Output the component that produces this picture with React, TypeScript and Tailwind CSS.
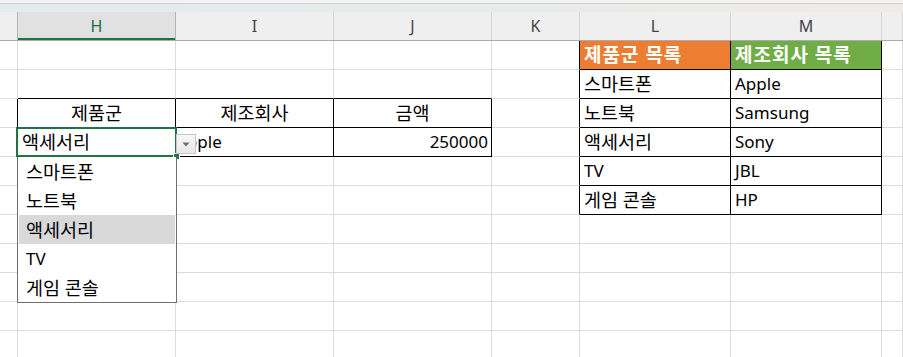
import React from "react";

type Cell = {
  text: string;
  align?: "left" | "center" | "right";
  kind?: "orange" | "green";
  pad?: "none";
};

const COLS = [18, 158, 158, 158, 88, 151, 151, 21];
const LETTERS = ["", "H", "I", "J", "K", "L", "M", ""];
const ROWS = 11;
const ROW_H = 29;

const cells: Record<string, Cell> = {
  "1,5": { text: "제품군 목록", kind: "orange" },
  "1,6": { text: "제조회사 목록", kind: "green" },
  "2,5": { text: "스마트폰" },
  "2,6": { text: "Apple" },
  "3,1": { text: "제품군", align: "center" },
  "3,2": { text: "제조회사", align: "center" },
  "3,3": { text: "금액", align: "center" },
  "3,5": { text: "노트북" },
  "3,6": { text: "Samsung" },
  "4,1": { text: "액세서리" },
  "4,2": { text: "Apple", pad: "none" },
  "4,3": { text: "250000", align: "right" },
  "4,5": { text: "액세서리" },
  "4,6": { text: "Sony" },
  "5,5": { text: "TV" },
  "5,6": { text: "JBL" },
  "6,5": { text: "게임 콘솔" },
  "6,6": { text: "HP" },
};

// bordered ranges: H3:J4 and L1:M6
function inTable(r: number, c: number) {
  if (r >= 3 && r <= 4 && c >= 1 && c <= 3) return true;
  if (r >= 1 && r <= 6 && c >= 5 && c <= 6) return true;
  return false;
}

const isHangul = (s: string) => /[가-힣]/.test(s);

const listItems = ["스마트폰", "노트북", "액세서리", "TV", "게임 콘솔"];

const FONT = {
  fontFamily: '"Noto Sans", "Noto Sans CJK KR", sans-serif',
};

function HeaderCell({ i }: { i: number }) {
  const selected = i === 1;
  const darkRight = i === 0 || i === 1;
  return (
    <div
      className={
        "flex items-center justify-center h-full border-r text-[16px] " +
        (darkRight ? "border-r-[#b4b4b4] " : "border-r-[#d6d6d6] ") +
        (selected
          ? "bg-[#e1e1e1] text-[#1d6b41] shadow-[inset_0_-2px_0_#217346]"
          : "bg-[#efefef] text-[#444444]")
      }
      style={{ width: COLS[i] }}
    >
      {LETTERS[i]}
    </div>
  );
}

function DataCell({ r, c }: { r: number; c: number }) {
  const cell = cells[`${r},${c}`];
  const blackRight = inTable(r, c) || inTable(r, c + 1);
  const blackBottom = inTable(r, c) || inTable(r + 1, c);
  const korean = cell ? isHangul(cell.text) : false;
  let bg = "bg-white text-black";
  let size = korean ? "text-[18.5px]" : "text-[17px]";
  if (cell?.kind === "orange") {
    bg = "bg-[#ed7d31] text-white font-bold";
    size = "text-[19px] tracking-[1px]";
  }
  if (cell?.kind === "green") {
    bg = "bg-[#70ad47] text-white font-bold";
    size = "text-[19px] tracking-[1px]";
  }
  const align =
    cell?.align === "center"
      ? "justify-center"
      : cell?.align === "right"
      ? "justify-end pr-[3px]"
      : cell?.pad === "none"
      ? "justify-start pl-0"
      : "justify-start pl-[4px]";
  return (
    <div
      className={
        "flex items-center h-full overflow-hidden whitespace-nowrap border-r border-b " +
        size +
        " " +
        (blackRight ? "border-r-black " : "border-r-[#dcdcdc] ") +
        (blackBottom ? "border-b-black " : "border-b-[#dcdcdc] ") +
        bg +
        " " +
        align
      }
      style={{ width: COLS[c] }}
    >
      {cell?.text}
    </div>
  );
}

export default function App() {
  return (
    <div className="relative w-[903px] h-[357px] overflow-hidden bg-white" style={FONT}>
      {/* ribbon edge above the column headers */}
      <div className="h-[3px] bg-[#f3f3f3]" />
      <div className="h-[9px] border-t border-t-[#d2d2d2] bg-gradient-to-r from-[#e2eceb] via-[#e8eceb] to-[#efebe8]" />

      {/* column headers */}
      <div className="flex h-[29px] border-b border-b-[#ababab]">
        {COLS.map((_, i) => (
          <HeaderCell key={i} i={i} />
        ))}
      </div>

      {/* cells */}
      {Array.from({ length: ROWS }, (_, ri) => {
        const r = ri + 1;
        return (
          <div key={r} className="flex" style={{ height: ROW_H }}>
            {COLS.map((_, c) => (
              <DataCell key={c} r={r} c={c} />
            ))}
          </div>
        );
      })}

      {/* active cell H4 */}
      <div className="absolute left-[16px] top-[127px] w-[161px] h-[30px] border-2 border-[#217346]" />
      <div className="absolute left-[174px] top-[154px] w-[5px] h-[5px] bg-[#217346] outline outline-1 outline-white" />

      {/* data validation dropdown button */}
      <div className="absolute left-[176px] top-[134px] w-[20px] h-[20px] border border-[#c6c6c6] bg-gradient-to-b from-[#f8f8f8] to-[#e8e8e8] flex items-center justify-center">
        <svg width="8" height="5" viewBox="0 0 8 5">
          <path d="M0.5 0.5 L7.5 0.5 L4 4.5 Z" fill="#6b6b6b" />
        </svg>
      </div>

      {/* dropdown list */}
      <div className="absolute left-[17px] top-[157px] w-[160px] h-[146px] bg-white border-x border-b border-[#6e6e6e] px-[1px] text-black">
        {listItems.map((item) => (
          <div
            key={item}
            className={
              "flex items-center h-[29px] pl-[7px] whitespace-nowrap " +
              (isHangul(item) ? "text-[18.5px] " : "text-[17px] ") +
              (item === "액세서리" ? "bg-[#d9d9d9]" : "")
            }
          >
            {item}
          </div>
        ))}
      </div>
    </div>
  );
}
